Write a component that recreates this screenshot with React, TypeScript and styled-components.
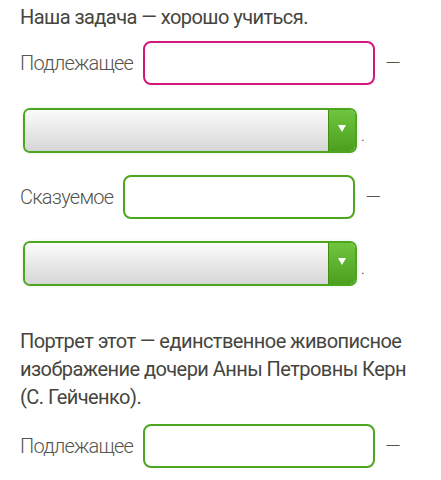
import React from "react";
import styled, { createGlobalStyle } from "styled-components";

const Global = createGlobalStyle`
  html, body { margin: 0; padding: 0; background: #ffffff; }
  body { font-family: Roboto, "Noto Sans", sans-serif; }
`;

const Page = styled.div`
  padding: 3px 20px 0 20px;
  width: 441px;
  box-sizing: border-box;
`;

const Heading = styled.div`
  font-size: 20px;
  line-height: 28px;
  color: #45453e;
  font-weight: 400;
  letter-spacing: -0.55px;
`;

const Paragraph = styled.div`
  font-size: 20px;
  line-height: 28px;
  color: #45453e;
  font-weight: 400;
  letter-spacing: -0.55px;
  margin-top: 41px;
  width: 401px;
`;

const Row = styled.div<{ $top: number }>`
  display: flex;
  align-items: center;
  margin-top: ${(p) => p.$top}px;
  gap: 10px;
`;

const Label = styled.span`
  font-size: 20px;
  font-weight: 300;
  color: #55554f;
  line-height: 28px;
  letter-spacing: -0.75px;
`;

const Input = styled.div<{ $color: string }>`
  width: 232px;
  height: 44px;
  box-sizing: border-box;
  border: 2px solid ${(p) => p.$color};
  border-radius: 8px;
  background: #fff;
`;

const Dash = styled.span`
  font-size: 20px;
  font-weight: 300;
  color: #55554f;
  letter-spacing: -0.75px;
`;

const SelectRow = styled.div<{ $top: number }>`
  display: flex;
  align-items: flex-end;
  margin-top: ${(p) => p.$top}px;
  padding-left: 3px;
`;

const Select = styled.div`
  width: 334px;
  height: 45px;
  box-sizing: border-box;
  border: 2px solid #4ea51f;
  border-radius: 7px;
  display: flex;
  overflow: hidden;
  box-shadow: 0 0 3px rgba(120, 190, 80, 0.25);
`;

const SelectBody = styled.div`
  flex: 1;
  background: linear-gradient(#fbfbfb, #d6d6d6);
`;

const SelectButton = styled.div`
  width: 26px;
  border-left: 1px solid #3f8f16;
  background: linear-gradient(#6fc53f, #4b9f1e);
  display: flex;
  align-items: center;
  justify-content: center;
`;

const Triangle = styled.span`
  width: 0;
  height: 0;
  border-left: 4px solid transparent;
  border-right: 4px solid transparent;
  border-top: 7px solid #ffffff;
  margin-top: -4px;
`;

const Dot = styled.span`
  font-size: 14px;
  color: #666;
  margin-left: 4px;
  line-height: 18px;
  margin-bottom: 8px;
`;

const Field = ({ label, color }: { label: string; color: string }) => (
  <>
    <Label>{label}</Label>
    <Input $color={color} />
    <Dash>—</Dash>
  </>
);

const DropDown = ({ top }: { top: number }) => (
  <SelectRow $top={top}>
    <Select>
      <SelectBody />
      <SelectButton>
        <Triangle />
      </SelectButton>
    </Select>
    <Dot>.</Dot>
  </SelectRow>
);

export default function App() {
  return (
    <Page>
      <Global />
      <Heading>Наша задача — хорошо учиться.</Heading>
      <Row $top={10}>
        <Field label="Подлежащее" color="#d3187c" />
      </Row>
      <DropDown top={23} />
      <Row $top={22}>
        <Field label="Сказуемое" color="#4ea51f" />
      </Row>
      <DropDown top={22} />
      <Paragraph>
        Портрет этот — единственное живописное изображение дочери Анны Петровны Керн (С.&nbsp;Гейченко).
      </Paragraph>
      <Row $top={13}>
        <Field label="Подлежащее" color="#4ea51f" />
      </Row>
    </Page>
  );
}
